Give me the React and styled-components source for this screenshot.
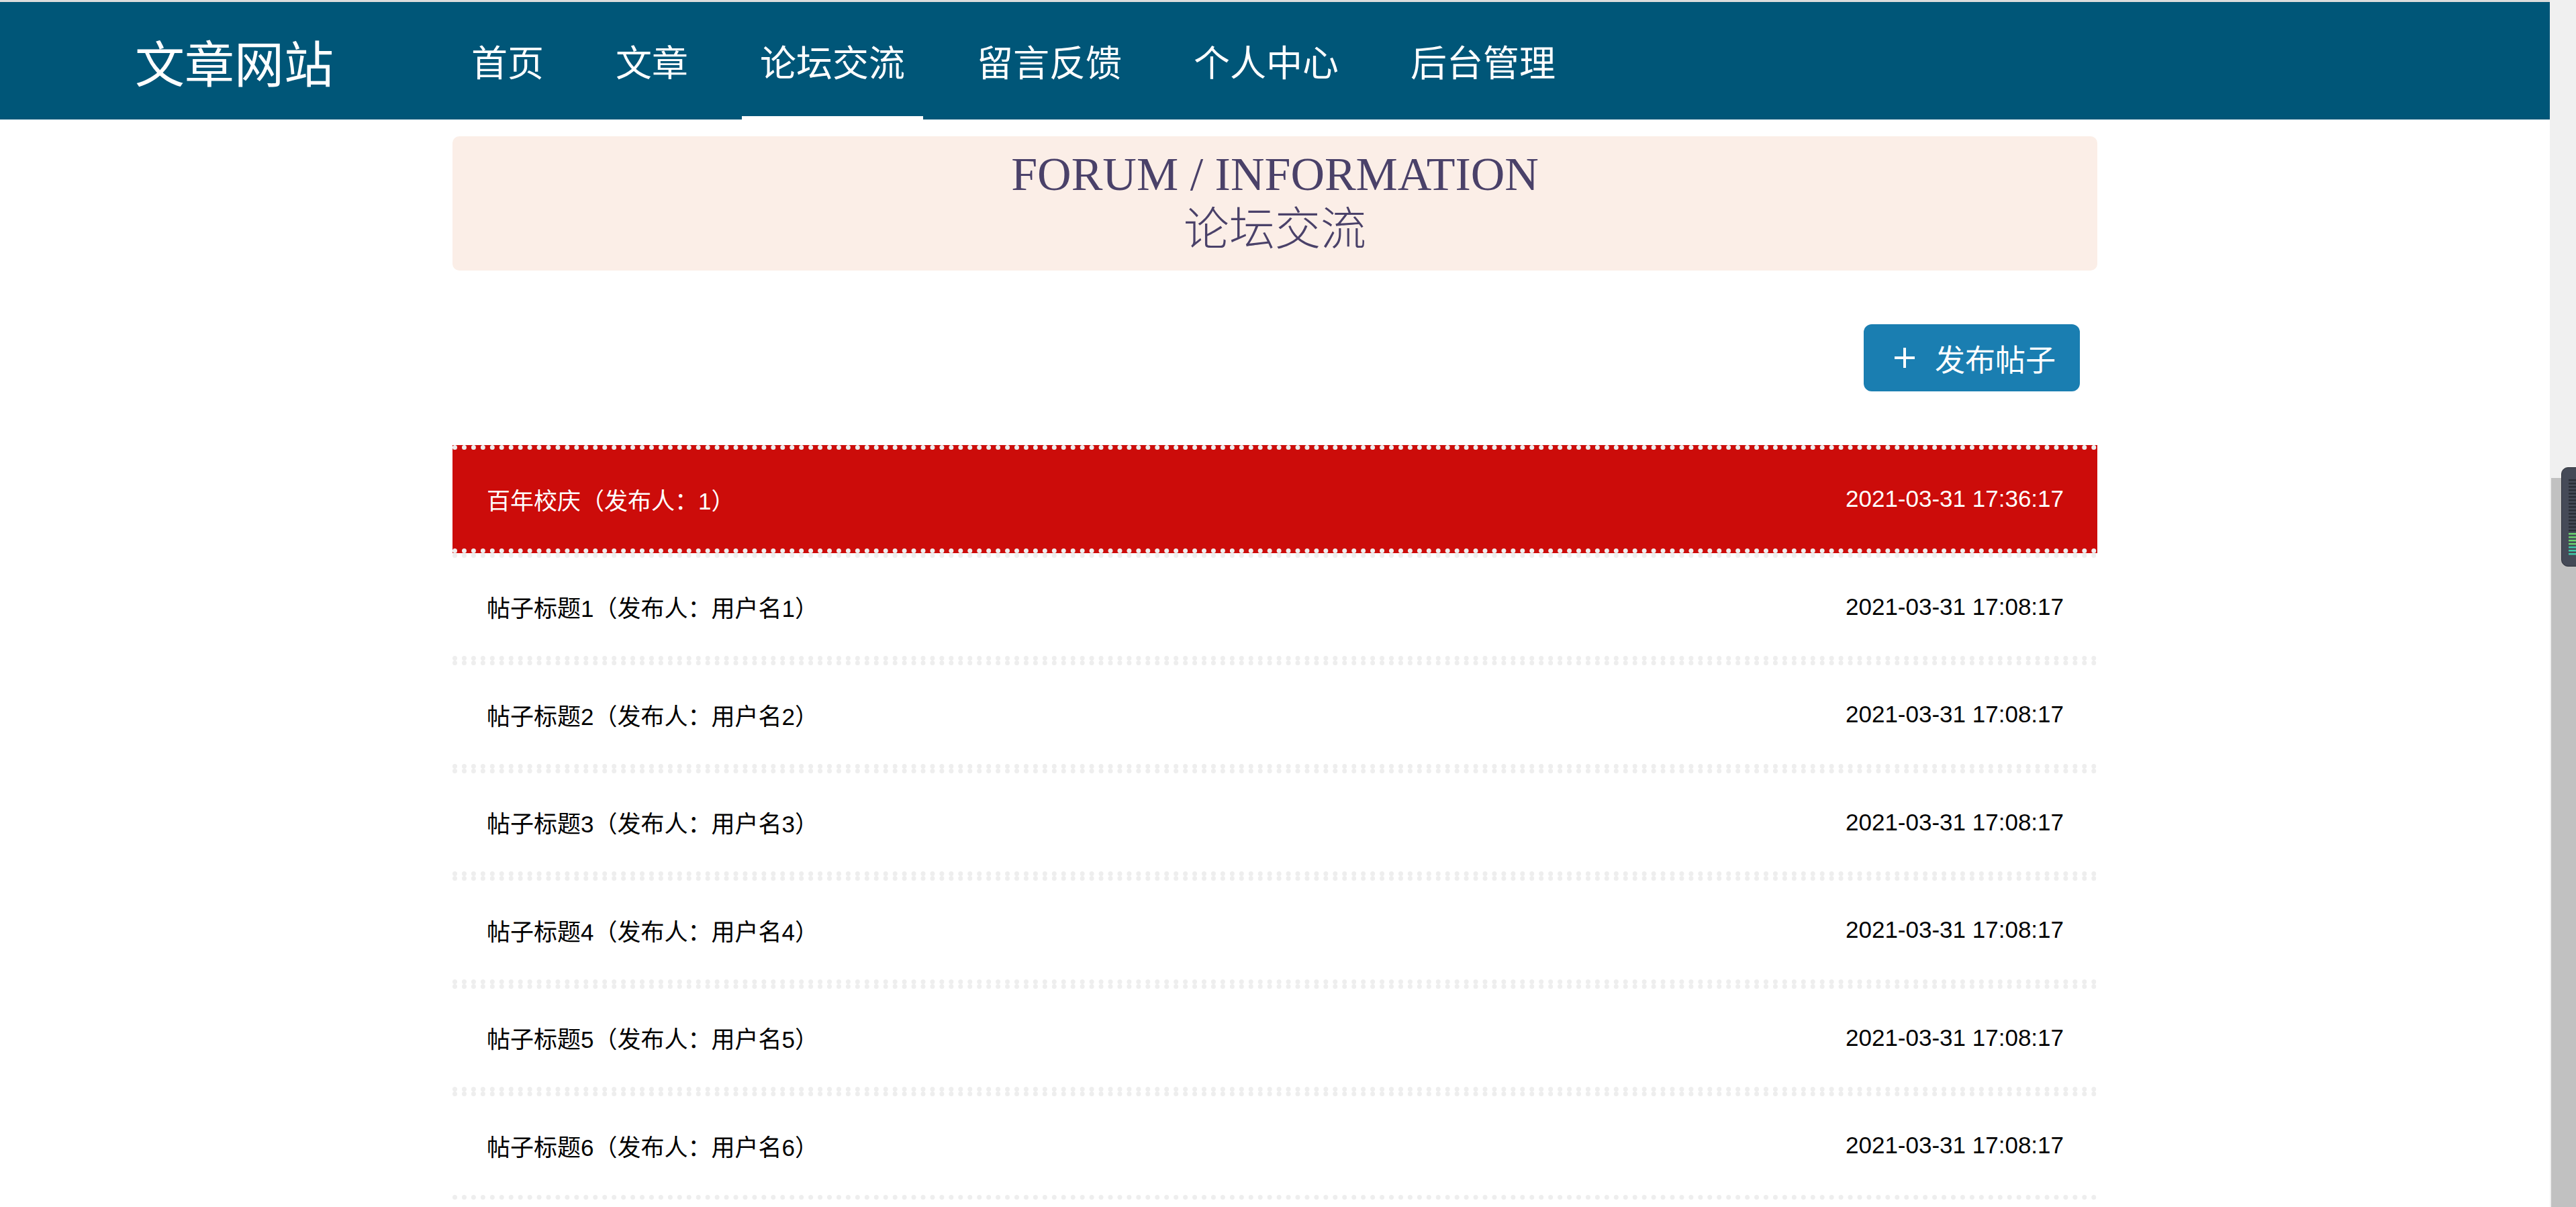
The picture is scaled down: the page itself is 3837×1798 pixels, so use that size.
import React from 'react';
import styled, { createGlobalStyle } from 'styled-components';

const GlobalStyle = createGlobalStyle`
  html, body {
    margin: 0;
    padding: 0;
    background: #fff;
    overflow: hidden;
  }
  body {
    font-family: "Liberation Sans", "Noto Sans CJK SC", sans-serif;
    color: #000;
  }
`;

const navItems = ['首页', '文章', '论坛交流', '留言反馈', '个人中心', '后台管理'];

const posts = [
    { title: '百年校庆（发布人：1）', time: '2021-03-31 17:36:17', hot: true },
    { title: '帖子标题1（发布人：用户名1）', time: '2021-03-31 17:08:17' },
    { title: '帖子标题2（发布人：用户名2）', time: '2021-03-31 17:08:17' },
    { title: '帖子标题3（发布人：用户名3）', time: '2021-03-31 17:08:17' },
    { title: '帖子标题4（发布人：用户名4）', time: '2021-03-31 17:08:17' },
    { title: '帖子标题5（发布人：用户名5）', time: '2021-03-31 17:08:17' },
    { title: '帖子标题6（发布人：用户名6）', time: '2021-03-31 17:08:17' },
];

const PlusIcon = () => (
    <svg width="32" height="32" viewBox="0 0 32 32">
        <path d="M16 1v30M1 16h30" stroke="#fff" strokeWidth="4" fill="none" />
    </svg>
);

const MeterWidget = () => (
    <Widget>
        <svg width="22" height="146" viewBox="0 0 22 146">
            {Array.from({ length: 23 }).map((_, i) => {
                const y = 17 + i * 5;
                const lit = i >= 16;
                return (
                    <rect
                        key={i}
                        x="10"
                        y={y}
                        width="12"
                        height="2.5"
                        fill={lit ? (i > 19 ? '#3ec9a7' : '#6bd36f') : '#2a2e37'}
                    />
                );
            })}
        </svg>
    </Widget>
);

const App = () => {
    return (
        <Page>
            <GlobalStyle />
            <Viewport>
                <Header>
                    <Logo>文章网站</Logo>
                    <Nav>
                        {navItems.map((item) => (
                            <NavItem key={item} $active={item === '论坛交流'}>
                                {item}
                            </NavItem>
                        ))}
                    </Nav>
                </Header>
                <Main>
                    <Banner>
                        <BannerEn>FORUM / INFORMATION</BannerEn>
                        <BannerCn>论坛交流</BannerCn>
                    </Banner>
                    <ActionBar>
                        <PublishButton>
                            <PlusIcon />
                            发布帖子
                        </PublishButton>
                    </ActionBar>
                    <PostList>
                        {posts.map((post, index) => (
                            <PostRow key={index} $hot={post.hot}>
                                <PostTitle>{post.title}</PostTitle>
                                <PostTime>{post.time}</PostTime>
                            </PostRow>
                        ))}
                    </PostList>
                </Main>
            </Viewport>
            <ScrollTrack>
                <ScrollThumb />
            </ScrollTrack>
            <MeterWidget />
        </Page>
    );
};

const Page = styled.div`
  position: relative;
  display: flex;
  width: 100vw;
  height: 100vh;
  overflow: hidden;
`;

const Viewport = styled.div`
  flex: 1;
  min-width: 0;
  overflow: hidden;
`;

const Header = styled.header`
  display: flex;
  align-items: stretch;
  height: 175px;
  border-top: 3px solid #dcdcdc;
  background-color: #005678;
  padding-left: 201px;
`;

const Logo = styled.div`
  align-self: center;
  width: 474px;
  font-size: 74px;
  line-height: 1;
  color: #fff;
  font-family: "Noto Sans CJK SC", sans-serif;
`;

const Nav = styled.nav`
  display: flex;
  gap: 53px;
`;

const NavItem = styled.a`
  position: relative;
  display: flex;
  align-items: center;
  padding: 0 27px;
  font-size: 54px;
  color: #fff;
  font-family: "Noto Sans CJK SC", sans-serif;
  cursor: pointer;

  &::after {
    content: '';
    position: absolute;
    left: 0;
    right: 0;
    bottom: 0;
    height: 5px;
    background: #fff;
    display: ${(p) => (p.$active ? 'block' : 'none')};
  }
`;

const Main = styled.main`
  width: 2450px;
  margin: 25px auto 0;
`;

const Banner = styled.div`
  height: 200px;
  box-sizing: border-box;
  padding-top: 17px;
  background-color: #fbeee7;
  border-radius: 10px;
  text-align: center;
  color: #4a4169;
  font-family: "Liberation Serif", "Noto Sans CJK SC", serif;
`;

const BannerEn = styled.div`
  font-size: 70px;
  line-height: 80px;
`;

const BannerCn = styled.div`
  font-size: 68px;
  line-height: 84px;
  font-weight: 300;
`;

const ActionBar = styled.div`
  display: flex;
  justify-content: flex-end;
  padding: 80px 26px 80px 0;
`;

const PublishButton = styled.button`
  display: flex;
  align-items: center;
  gap: 29px;
  height: 100px;
  width: 322px;
  box-sizing: border-box;
  padding: 0 0 0 45px;
  border: none;
  border-radius: 12px;
  background-color: #1a7eb1;
  color: #fff;
  font-size: 45px;
  font-family: "Noto Sans CJK SC", sans-serif;
  cursor: pointer;
`;

const PostList = styled.div`
  display: flex;
  flex-direction: column;
`;

const PostRow = styled.div`
  display: flex;
  justify-content: space-between;
  align-items: center;
  height: 146.5px;
  padding: 0 50px 0 51px;
  border-top: 7px dotted #eee;
  border-bottom: 7px dotted #eee;
  background-color: ${(p) => (p.$hot ? '#cc0c0a' : '#fff')};
  color: ${(p) => (p.$hot ? '#fff' : '#000')};
  font-size: 35px;
`;

const PostTitle = styled.span``;

const PostTime = styled.span``;

const ScrollTrack = styled.div`
  width: 39px;
  flex-shrink: 0;
  display: flex;
  flex-direction: column;
  padding-top: 712px;
  box-sizing: border-box;
  background-color: #f0f0f0;
`;

const ScrollThumb = styled.div`
  flex: 1;
  margin-left: 2px;
  background-color: #c1c1c1;
`;

const Widget = styled.div`
  position: absolute;
  left: 3815px;
  top: 696px;
  width: 30px;
  height: 146px;
  border-radius: 10px 0 0 10px;
  background: #454a57;
  border: 1px solid #2c3039;
  overflow: hidden;
`;

export default App;
